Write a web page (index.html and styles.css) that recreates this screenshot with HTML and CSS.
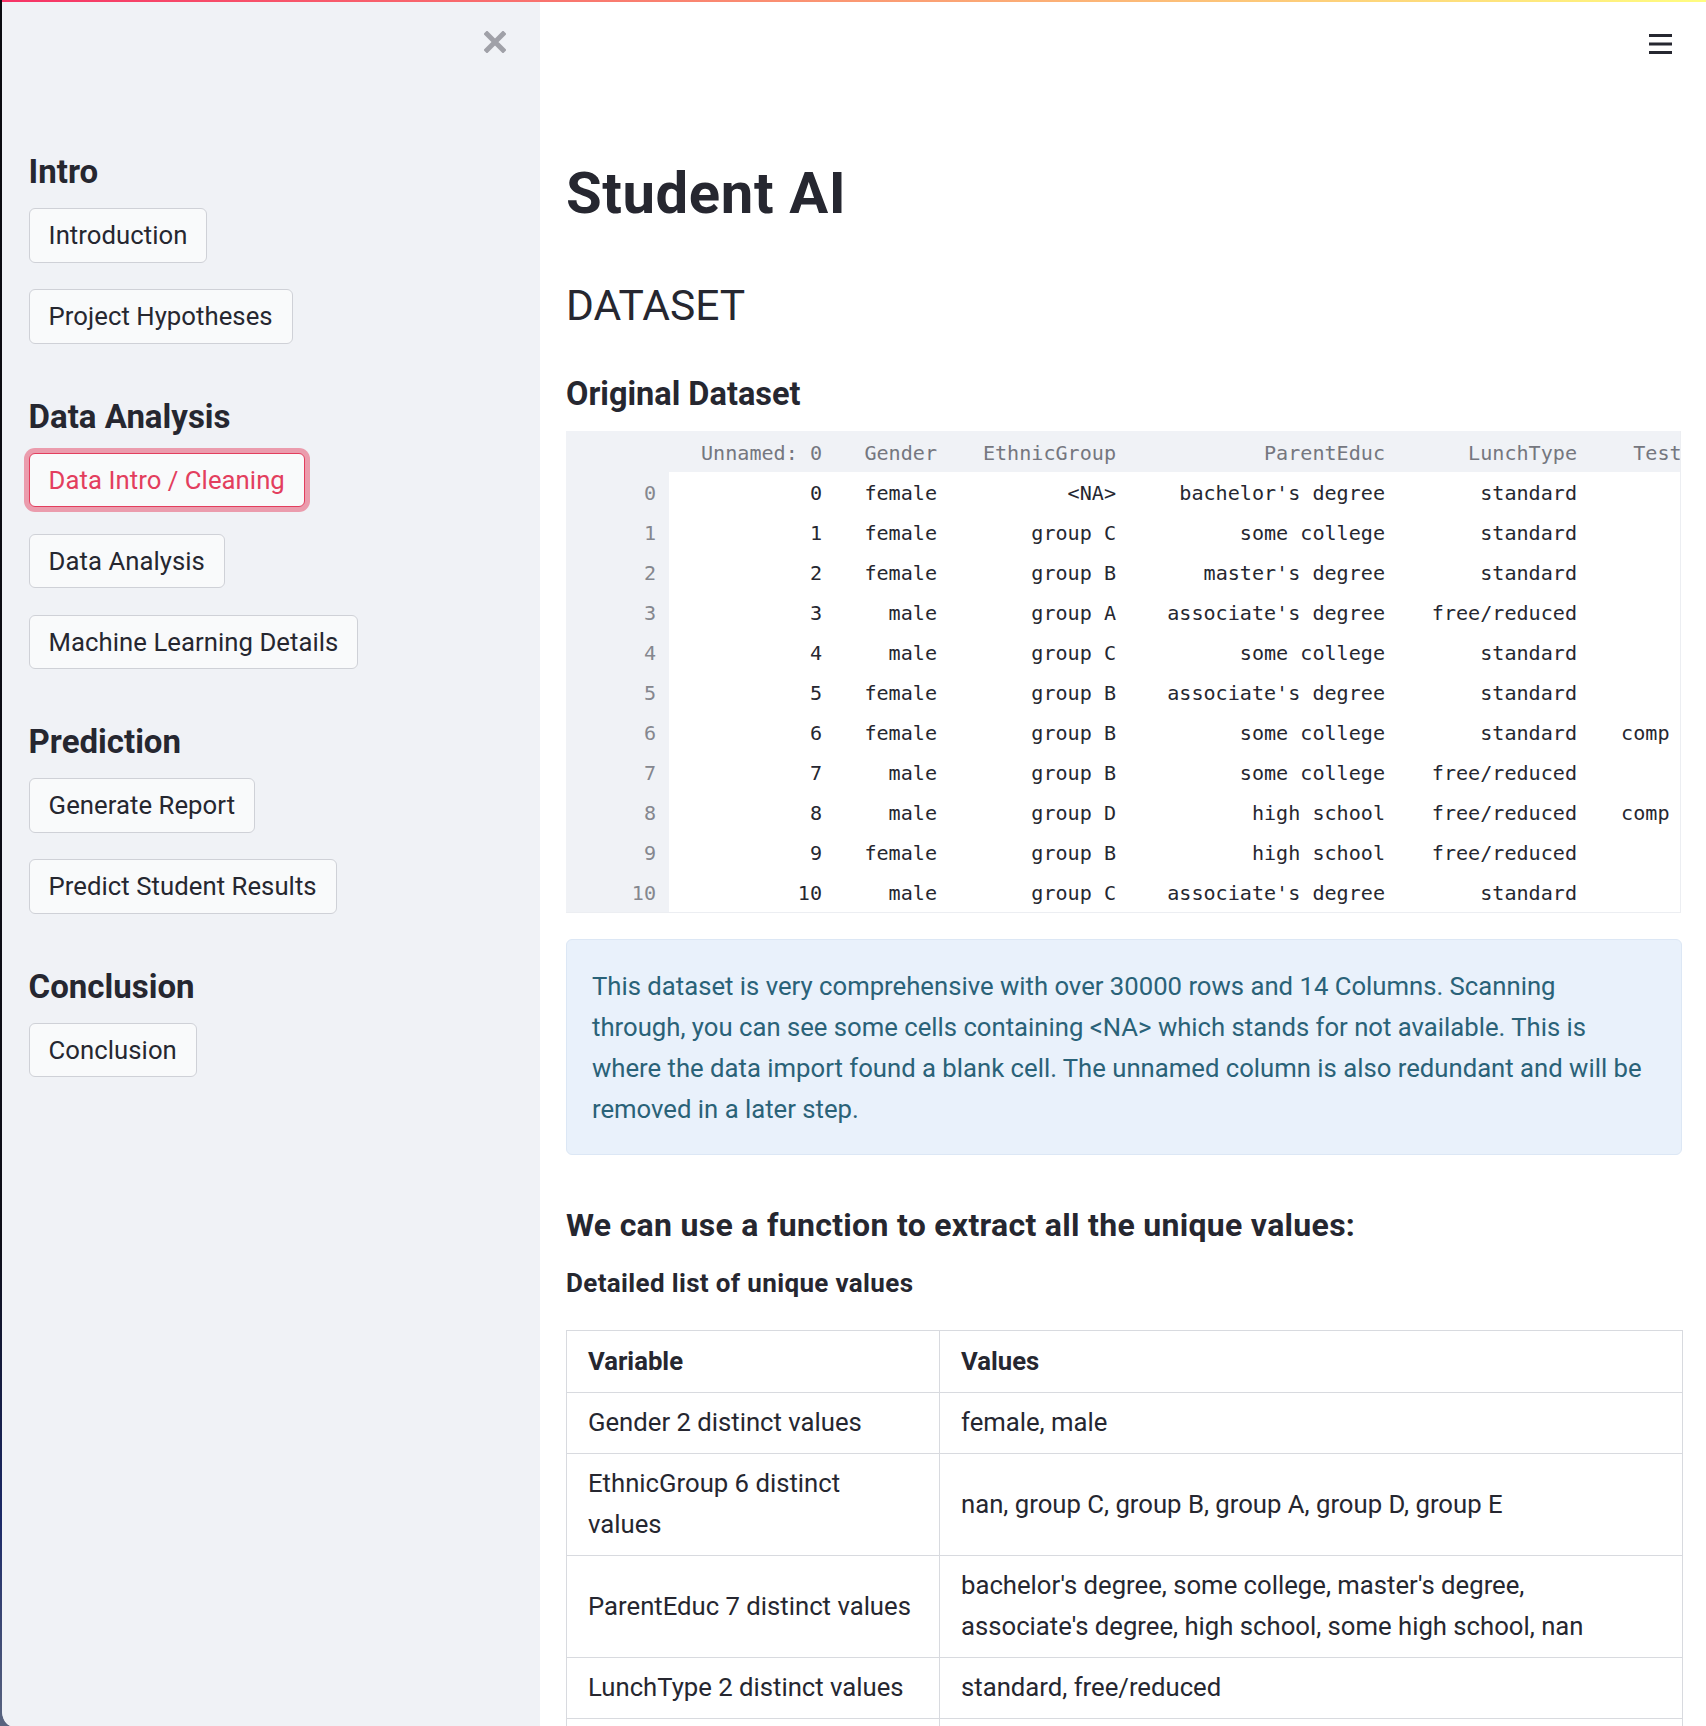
FILE: index.html
```html
<!DOCTYPE html>
<html lang="en">
<head>
<meta charset="utf-8">
<title>Student AI</title>
<link rel="stylesheet" href="styles.css">
</head>
<body>
<div class="app">
  <div class="decoration"></div>
  <div class="layout">
    <aside class="sidebar">
      <div class="sidebar-top">
        <svg class="close-icon" width="22" height="22" viewBox="0 0 22 22" aria-hidden="true">
          <path d="M3 3 L19 19 M19 3 L3 19" stroke="#a0a1a8" stroke-width="5" stroke-linecap="square" fill="none"/>
        </svg>
      </div>

      <section class="nav-section first">
        <h2 class="nav-heading">Intro</h2>
        <div class="nav-buttons">
          <button class="nav-btn">Introduction</button>
          <button class="nav-btn">Project Hypotheses</button>
        </div>
      </section>

      <section class="nav-section">
        <h2 class="nav-heading">Data Analysis</h2>
        <div class="nav-buttons">
          <button class="nav-btn active">Data Intro / Cleaning</button>
          <button class="nav-btn">Data Analysis</button>
          <button class="nav-btn">Machine Learning Details</button>
        </div>
      </section>

      <section class="nav-section">
        <h2 class="nav-heading">Prediction</h2>
        <div class="nav-buttons">
          <button class="nav-btn">Generate Report</button>
          <button class="nav-btn">Predict Student Results</button>
        </div>
      </section>

      <section class="nav-section">
        <h2 class="nav-heading">Conclusion</h2>
        <div class="nav-buttons">
          <button class="nav-btn">Conclusion</button>
        </div>
      </section>
    </aside>

    <main class="main">
      <div class="topbar">
        <svg class="menu-icon" width="23" height="20" viewBox="0 0 23 20" aria-hidden="true">
          <rect x="0" y="0" width="23" height="3" fill="#262730"/>
          <rect x="0" y="8.5" width="23" height="3" fill="#262730"/>
          <rect x="0" y="17" width="23" height="3" fill="#262730"/>
        </svg>
      </div>

      <div class="content">
        <h1 class="title">Student AI</h1>
        <h2 class="section-title">DATASET</h2>
        <h3 class="subheader">Original Dataset</h3>

        <div class="df">
          <table class="df-table">
            <colgroup>
              <col class="c-idx"><col class="c-unnamed"><col class="c-gender"><col class="c-ethnic"><col class="c-parent"><col class="c-lunch"><col class="c-test">
            </colgroup>
            <thead>
              <tr>
                <th></th><th>Unnamed: 0</th><th>Gender</th><th>EthnicGroup</th><th>ParentEduc</th><th>LunchType</th><th>TestPrep</th>
              </tr>
            </thead>
            <tbody>
              <tr><th>0</th><td>0</td><td>female</td><td>&lt;NA&gt;</td><td>bachelor's degree</td><td>standard</td><td>none</td></tr>
              <tr><th>1</th><td>1</td><td>female</td><td>group C</td><td>some college</td><td>standard</td><td>&lt;NA&gt;</td></tr>
              <tr><th>2</th><td>2</td><td>female</td><td>group B</td><td>master's degree</td><td>standard</td><td>none</td></tr>
              <tr><th>3</th><td>3</td><td>male</td><td>group A</td><td>associate's degree</td><td>free/reduced</td><td>none</td></tr>
              <tr><th>4</th><td>4</td><td>male</td><td>group C</td><td>some college</td><td>standard</td><td>none</td></tr>
              <tr><th>5</th><td>5</td><td>female</td><td>group B</td><td>associate's degree</td><td>standard</td><td>none</td></tr>
              <tr><th>6</th><td>6</td><td>female</td><td>group B</td><td>some college</td><td>standard</td><td>completed</td></tr>
              <tr><th>7</th><td>7</td><td>male</td><td>group B</td><td>some college</td><td>free/reduced</td><td>none</td></tr>
              <tr><th>8</th><td>8</td><td>male</td><td>group D</td><td>high school</td><td>free/reduced</td><td>completed</td></tr>
              <tr><th>9</th><td>9</td><td>female</td><td>group B</td><td>high school</td><td>free/reduced</td><td>none</td></tr>
              <tr><th>10</th><td>10</td><td>male</td><td>group C</td><td>associate's degree</td><td>standard</td><td>none</td></tr>
            </tbody>
          </table>
        </div>

        <div class="info">
          This dataset is very comprehensive with over 30000 rows and 14 Columns. Scanning<br>
          through, you can see some cells containing &lt;NA&gt; which stands for not available. This is<br>
          where the data import found a blank cell. The unnamed column is also redundant and will be<br>
          removed in a later step.
        </div>

        <h4 class="h4">We can use a function to extract all the unique values:</h4>
        <p class="strong-line">Detailed list of unique values</p>

        <table class="uv">
          <colgroup><col class="uv-var"><col class="uv-val"></colgroup>
          <thead>
            <tr><th>Variable</th><th>Values</th></tr>
          </thead>
          <tbody>
            <tr><td>Gender 2 distinct values</td><td>female, male</td></tr>
            <tr><td>EthnicGroup 6 distinct values</td><td>nan, group C, group B, group A, group D, group E</td></tr>
            <tr><td>ParentEduc 7 distinct values</td><td>bachelor's degree, some college, master's degree,<br>associate's degree, high school, some high school, nan</td></tr>
            <tr><td>LunchType 2 distinct values</td><td>standard, free/reduced</td></tr>
            <tr><td>TestPrep 3 distinct values</td><td>none, nan, completed</td></tr>
          </tbody>
        </table>
      </div>
    </main>
  </div>
</div>
</body>
</html>
```

FILE: styles.css
```css
* { box-sizing: border-box; }

html, body {
  margin: 0;
  padding: 0;
}

body {
  height: 100vh;
  overflow: hidden;
  font-family: Roboto, "Noto Sans", sans-serif;
  color: #262730;
  background: linear-gradient(180deg, #0b0b10 0%, #0e0e18 72%, #1c2a68 88%, #5a6580 100%);
}

.app {
  margin-left: 2px;
  height: 100vh;
  display: flex;
  flex-direction: column;
  overflow: hidden;
  background: #ffffff;
  border-bottom-left-radius: 10px 16px;
}

.decoration {
  flex: none;
  height: 2px;
  background: linear-gradient(90deg, #f63366, #fffd80);
}

.layout {
  flex: 1;
  display: flex;
  min-height: 0;
}

/* Sidebar */
.sidebar {
  flex: none;
  width: 538px;
  background: #f0f2f6;
  padding: 29px 34px 0 26.6px;
  display: flex;
  flex-direction: column;
}

.sidebar-top {
  display: flex;
  justify-content: flex-end;
}

.close-icon { display: block; }

.nav-section {
  display: flex;
  flex-direction: column;
  align-items: flex-start;
  margin-top: 53px;
}

.nav-section.first { margin-top: 99px; }

.nav-heading {
  margin: 0 0 16px;
  font-size: 33px;
  font-weight: 700;
  line-height: 40px;
  color: #262730;
}

.nav-buttons {
  display: flex;
  flex-direction: column;
  align-items: flex-start;
  gap: 26.5px;
}

.nav-btn {
  font-family: Roboto, "Noto Sans", sans-serif;
  font-size: 25.7px;
  font-weight: 400;
  line-height: 38.5px;
  letter-spacing: 0.05px;
  padding: 7px 19px;
  border: 1px solid #cfd1d7;
  border-radius: 6px;
  background: #f9fafb;
  color: #262730;
  cursor: pointer;
}

.nav-btn.active {
  color: #e33e5e;
  border-color: #e33e5e;
  box-shadow: 0 0 0 5px rgba(230, 70, 100, 0.5);
}

/* Main */
.main {
  flex: 1;
  min-width: 0;
  display: flex;
  flex-direction: column;
  background: #ffffff;
}

.topbar {
  display: flex;
  justify-content: flex-end;
  padding: 32px 34px 0 0;
}

.menu-icon { display: block; }

.content {
  padding: 0 24px 0 26px;
}

.title {
  margin: 104px 0 0;
  font-size: 58px;
  font-weight: 700;
  line-height: 70px;
  letter-spacing: 0.6px;
}

.section-title {
  margin: 53px 0 0;
  font-size: 42.5px;
  font-weight: 400;
  line-height: 50px;
}

.subheader {
  margin: 43px 0 0;
  font-size: 32.5px;
  font-weight: 700;
  line-height: 40px;
}

/* Dataframe */
.df {
  margin-top: 17px;
  width: 1115px;
  overflow: hidden;
  background: #ffffff;
  border-right: 1px solid #eceef2;
  border-bottom: 1px solid #eceef2;
}

.df-table {
  border-collapse: collapse;
  table-layout: fixed;
  width: 1177px;
  font-family: "DejaVu Sans Mono", "Liberation Mono", monospace;
  font-size: 20.1px;
}

.c-idx { width: 103px; }
.c-unnamed { width: 166px; }
.c-gender { width: 115px; }
.c-ethnic { width: 179px; }
.c-parent { width: 269px; }
.c-lunch { width: 192px; }
.c-test { width: 153px; }

.df-table th,
.df-table td {
  padding: 2px 13px 0 0;
  text-align: right;
  white-space: nowrap;
  overflow: hidden;
  font-weight: 400;
}

.df-table thead th {
  height: 41px;
  background: #f0f2f6;
  color: #75777f;
}

.df-table tbody th {
  height: 40px;
  background: #f0f2f6;
  color: #85878e;
}

.df-table tbody td {
  height: 40px;
  color: #262730;
}

.df-table tbody td:last-child {
  clip-path: inset(0 73px 0 0);
}

/* Info box */
.info {
  margin-top: 26px;
  padding: 25.5px 25px 24.5px;
  background: #e9f1fb;
  border: 1px solid #dce7f5;
  border-radius: 6px;
  color: #2a6278;
  font-size: 25.7px;
  line-height: 41.1px;
  white-space: nowrap;
}

.h4 {
  margin: 50px 0 0;
  font-size: 32px;
  font-weight: 700;
  line-height: 40px;
  letter-spacing: 0.3px;
}

.strong-line {
  margin: 18px 0 0;
  font-size: 26px;
  font-weight: 700;
  line-height: 40px;
  letter-spacing: 0.35px;
}

/* Unique values table */
.uv {
  margin-top: 27px;
  width: 1116px;
  border-collapse: collapse;
  table-layout: fixed;
  font-size: 25.7px;
  line-height: 40.8px;
  color: #262730;
}

.uv-var { width: 373px; }
.uv-val { width: 743px; }

.uv th,
.uv td {
  border: 1px solid #d8dadf;
  padding: 9.7px 21px;
  text-align: left;
  vertical-align: middle;
}

.uv th { font-weight: 700; }
```
